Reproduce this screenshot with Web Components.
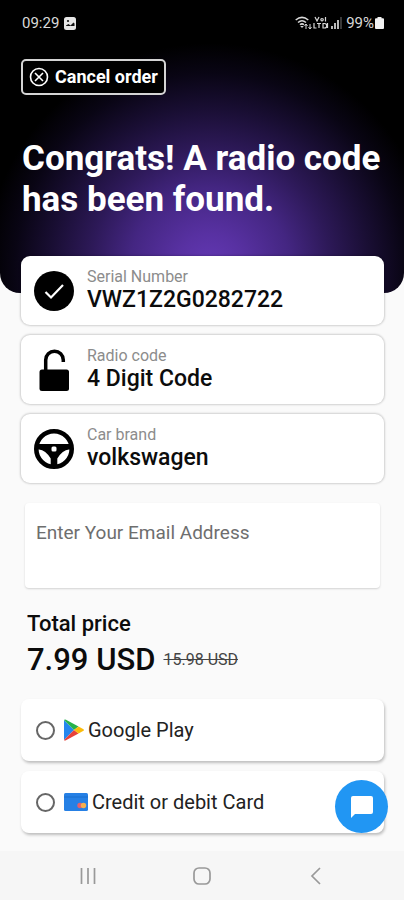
<!DOCTYPE html>
<html lang="en">
<head>
<meta charset="utf-8">
<meta name="viewport" content="width=device-width, initial-scale=1">
<title>Radio code order</title>
<style>
  html { background: #fafafa; }
  body { margin: 0; font-family: Roboto, "Liberation Sans", sans-serif; color: #0c0c0c; }
</style>
</head>
<body>
<order-page></order-page>
<script>
const define = (name, html, setup) => {
  const template = document.createElement('template');
  template.innerHTML = html;
  customElements.define(name, class extends HTMLElement {
    constructor() {
      super();
      this.attachShadow({ mode: 'open' }).append(template.content.cloneNode(true));
    }
    connectedCallback() { if (setup) setup(this, this.shadowRoot); }
  });
};

define('status-bar', `
<style>
  :host { display: flex; align-items: center; justify-content: space-between; height: 46px; padding: 0 20px 0 22px; color: #d9d9d9; font-size: 15px; }
  div { display: flex; align-items: center; }
  .left { gap: 5px; } .right { gap: 1px; }
  .signals { margin-right: 3px; }
  svg { display: block; }
</style>
<div class="left"><span>09:29</span>
  <svg width="12" height="13" viewBox="0 0 12 13"><rect width="12" height="13" rx="2.500" fill="#e6e6e6"/><path d="M2 8.500l2.500-1.500 2 1.500 3-3 1 1v2.500H2z" fill="#111"/><circle cx="4" cy="4" r="1.100" fill="#111"/></svg>
</div>
<div class="right">
  <svg class="signals" width="47" height="14" viewBox="0 0 47 14" fill="none" stroke="#d9d9d9" stroke-width="1.500">
    <path d="M.7 4Q7-1.300 13.300 4M3 6.500Q7 3 11 6.500M5 8.800Q7 7 9 8.800"/><path d="M7 12l-1.800-2h3.600z" fill="#d9d9d9" stroke="none"/>
    <path d="M11 13V8m-1.500 2L11 8l1.500 2M15 8v5m-1.500-2l1.500 2 1.500-2" stroke-width="1"/>
    <path d="M20 1l2 4 2-4M27 2.500a1.200 1.200 0 1 0 .1 0M30.500 1v4.500M19 7v5h2.500M22 7.500h4M24 7.500V12M28 7.500V12h1.500a2 2 0 0 0 0-4.500zM32.500 7v5" stroke-width="1.200"/>
    <path d="M37 10v3M40 7v6M43 4v9" stroke-width="1.700"/><path d="M46 1v12" stroke="#444" stroke-width="1.700"/>
  </svg>
  <span>99%</span>
  <svg width="9" height="12" viewBox="0 0 9 12" fill="#f2f2f2"><path d="M2.500 0h4v1.300H8a1 1 0 0 1 1 1V11a1 1 0 0 1-1 1H1a1 1 0 0 1-1-1V2.300a1 1 0 0 1 1-1h1.500z"/></svg>
</div>`);

define('cancel-button', `
<style>
  :host { display: inline-block; }
  button { display: flex; align-items: center; gap: 6px; height: 36px; padding: 0 6px; border: 2px solid #d4d4d4; border-radius: 5px; background: #000; color: #fff; font: 700 18px/1 Roboto, "Liberation Sans", sans-serif; white-space: nowrap; }
  svg { display: block; }
</style>
<button type="button">
  <svg width="20" height="20" viewBox="0 0 20 20" fill="none" stroke="#fff" stroke-width="1.600" aria-hidden="true"><circle cx="10" cy="10" r="8.500"/><path d="M6 6l8 8M14 6l-8 8"/></svg>
  <slot></slot>
</button>`);

define('hero-banner', `
<style>
  :host { display: block; padding-bottom: 73px; border-radius: 0 0 20px 20px; color: #fff;
    background: radial-gradient(circle at 52% 268px, #6338b4 0, #5831a2 34px, #442682 80px, #2d1958 120px, #190e33 160px, #090514 195px, #000 225px) #000; }
  .action { padding: 13px 21px 0; }
  h1 { margin: 0; padding: 43px 12px 0 22px; font-size: 35px; line-height: 41px; font-weight: 700; }
</style>
<status-bar></status-bar>
<div class="action"><slot name="action"></slot></div>
<h1><slot></slot></h1>`);

define('info-card', `
<style>
  :host { display: grid; grid-template-columns: 40px 1fr; align-items: center; gap: 13px; height: 69px; box-sizing: border-box; padding: 0 13px; border-radius: 9px; background: #fff; box-shadow: 0 0 2px 1px rgba(0, 0, 0, .17); }
  dl, dd { margin: 0; } dl { padding-bottom: 2px; }
  dt { color: #8c8c8c; font-size: 16px; line-height: 20px; }
  dd { font-size: 23px; line-height: 26px; font-weight: 500; }
  ::slotted(svg) { display: block; }
</style>
<slot name="icon"></slot>
<dl><dt></dt><dd><slot></slot></dd></dl>`, (el, root) => { root.querySelector('dt').textContent = el.getAttribute('label'); });

define('email-field', `
<style>
  :host { display: block; padding: 0 4px; }
  input { display: block; box-sizing: border-box; width: 100%; height: 85px; padding: 0 11px 27px; border: 0; border-radius: 4px; background: #fff; box-shadow: 0 1px 2px #d2d2d2; font: 400 19px Roboto, "Liberation Sans", sans-serif; color: #222; }
  input::placeholder { color: #6e6e6e; opacity: 1; }
</style>
<input type="email" aria-label="Enter Your Email Address" placeholder="Enter Your Email Address">`);

define('price-total', `
<style>
  :host { display: block; padding: 0 6px; }
  h2 { margin: 0; font-size: 22px; line-height: 28px; font-weight: 500; }
  p { display: flex; align-items: center; gap: 8px; margin: 0; line-height: 44px; }
  strong { font-size: 31px; font-weight: 500; }
  s { font-size: 16px; color: #444; }
</style>
<h2>Total price</h2>
<p><strong>7.99 USD</strong><s>15.98 USD</s></p>`);

define('pay-option', `
<style>
  :host { display: block; border-radius: 8px; background: #fff; box-shadow: 1px 2px 3px #bdbdbd; }
  label { display: flex; align-items: center; height: 62px; padding: 0 15px; font-size: 20px; color: #222; }
  input { appearance: none; box-sizing: border-box; width: 19px; height: 19px; margin: 0 9px 0 0; border: 2px solid #666; border-radius: 50%; background: #fff; }
  input:checked { box-shadow: inset 0 0 0 3px #fff; background: #2196f3; }
  ::slotted(svg) { display: block; margin-right: 4px; }
</style>
<label><input type="radio" name="payment"><slot name="icon"></slot><slot></slot></label>`);

define('chat-button', `
<style>
  :host { display: block; }
  button { display: grid; place-items: center; width: 53px; height: 53px; padding: 0; border: 0; border-radius: 50%; background: #2196f3; }
</style>
<button type="button" aria-label="Chat"><svg width="24" height="24" viewBox="0 0 24 24"><path d="M3 1h18a2 2 0 0 1 2 2v14a2 2 0 0 1-2 2H5l-4 4V3a2 2 0 0 1 2-2z" fill="#fff"/></svg></button>`);

define('system-nav', `
<style>
  :host { display: flex; justify-content: center; gap: 66px; height: 49px; background: #f6f6f6; }
  button { display: grid; place-items: center; width: 48px; padding: 0; border: 0; background: none; }
  svg { fill: none; stroke: #999; stroke-width: 1.700; }
</style>
<button type="button" aria-label="Recent apps"><svg width="20" height="20"><path d="M3.500 2v16M10 2v16M16.500 2v16"/></svg></button>
<button type="button" aria-label="Home"><svg width="20" height="20"><rect x="2" y="2" width="16" height="16" rx="5"/></svg></button>
<button type="button" aria-label="Back"><svg width="20" height="20"><path d="M14 2L6 10l8 8"/></svg></button>`);

define('order-page', `
<style>
  :host { display: flex; flex-direction: column; min-height: 100vh; background: #fafafa; }
  main { flex: 1; display: flex; flex-direction: column; margin-top: -37px; padding: 0 20px 18px 21px; }
  .cards { display: grid; gap: 10px; }
  email-field { margin-top: 20px; }
  price-total { margin-top: 22px; }
  .pay { position: relative; display: grid; gap: 10px; margin-top: 17px; }
  chat-button { position: absolute; right: -4px; bottom: 0; }
</style>
<hero-banner><cancel-button slot="action">Cancel order</cancel-button>Congrats! A radio code has been found.</hero-banner>
<main>
  <div class="cards">
    <info-card label="Serial Number"><svg slot="icon" width="40" height="40" viewBox="0 0 40 40"><circle cx="20" cy="20" r="20"/><path d="M11.500 21l5.500 5.500L29 14" fill="none" stroke="#fff" stroke-width="2.200"/></svg>VWZ1Z2G0282722</info-card>
    <info-card label="Radio code"><svg slot="icon" width="40" height="44" viewBox="0 0 40 44"><rect x="5.500" y="21.500" width="29.500" height="21.500" rx="2.500"/><path d="M11.700 23V12a8.800 8.800 0 0 1 17.600 0V14" fill="none" stroke="#000" stroke-width="3.500"/></svg>4 Digit Code</info-card>
    <info-card label="Car brand"><svg slot="icon" width="40" height="40" viewBox="0 0 40 40"><circle cx="20" cy="20" r="17.700" fill="none" stroke="#000" stroke-width="4.600"/><path d="M3 15H37V20.500H35Q28.500 21 23.300 29.500V38H16.700V29.500Q11.500 21 5 20.500H3Z"/><rect x="17.500" y="17.500" width="5" height="5" rx="1.500" fill="#fff"/></svg>volkswagen</info-card>
  </div>
  <email-field></email-field>
  <price-total></price-total>
  <div class="pay">
    <pay-option><svg slot="icon" width="20" height="22" viewBox="0 0 20 22"><path d="M0 1v20l10-10z" fill="#2587ee"/><path d="M0 1Q.6 0 2 .7L14.500 7.500 10 11z" fill="#27b24a"/><path d="M0 21Q.6 22 2 21.300L14.500 14.500 10 11z" fill="#e8423a"/><path d="M14.500 7.500L19.500 10.200q.8.800 0 1.600L14.500 14.500 10 11z" fill="#fbbc0b"/></svg>Google Play</pay-option>
    <pay-option><svg slot="icon" width="24" height="18" viewBox="0 0 24 18"><rect width="24" height="18" rx="1.500" fill="#2680e5"/><path d="M0 4h24" stroke="#196fce"/><circle cx="16" cy="12.500" r="2.700" fill="#e6606c"/><circle cx="19.500" cy="12.500" r="2.700" fill="#f4b04f"/></svg>Credit or debit Card</pay-option>
    <chat-button></chat-button>
  </div>
</main>
<system-nav></system-nav>`);
</script>
</body>
</html>
